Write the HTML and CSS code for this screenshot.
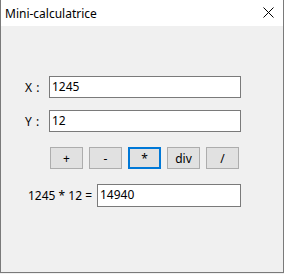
FILE: index.html
```html
<!DOCTYPE html>
<html lang="fr">
<head>
<meta charset="utf-8">
<title>Mini-calculatrice</title>
<link rel="stylesheet" href="styles.css">
</head>
<body>
<div class="window">
  <div class="titlebar">
    <span class="title">Mini-calculatrice</span>
    <svg class="close" width="11" height="11" viewBox="0 0 11 11"><path d="M0.5 0.5 L10.5 10.5 M10.5 0.5 L0.5 10.5" stroke="#000" stroke-width="1" fill="none"/></svg>
  </div>
  <div class="content">
    <div class="row row-x">
      <label class="lbl">X :</label>
      <div class="field">1245</div>
    </div>
    <div class="row row-y">
      <label class="lbl">Y :</label>
      <div class="field">12</div>
    </div>
    <div class="buttons">
      <button class="btn">+</button>
      <button class="btn">-</button>
      <button class="btn focus">*</button>
      <button class="btn">div</button>
      <button class="btn">/</button>
    </div>
    <div class="row result">
      <span class="expr">1245 * 12 =</span>
      <div class="field field-res">14940</div>
    </div>
  </div>
</div>
</body>
</html>
```
FILE: styles.css
```css
html, body {
  margin: 0;
  padding: 0;
  background: #f0f0f0;
}
body {
  font-family: "Segoe UI", "Noto Sans", "Open Sans", sans-serif;
  font-size: 12px;
  color: #000;
}
.window {
  width: 284px;
  height: 273px;
  box-sizing: border-box;
  border-left: 1px solid #7a7a7a;
  border-right: 1px solid #7a7a7a;
  border-bottom: 1px solid #7a7a7a;
  background: #f0f0f0;
  display: flex;
  flex-direction: column;
}
.titlebar {
  height: 26px;
  background: #fff;
  display: flex;
  align-items: center;
  justify-content: space-between;
  padding: 0 9px 0 4px;
  flex: none;
}
.title {
  font-size: 12px;
  line-height: 16px;
  margin-top: 2px;
}
.close {
  display: block;
  margin-top: -1px;
}
.content {
  display: flex;
  flex-direction: column;
  padding-top: 50px;
}
.row {
  display: flex;
  align-items: center;
  height: 22px;
}
.row-y {
  margin-top: 12px;
}
.lbl {
  width: 24px;
  margin-left: 24px;
  color: #000;
  letter-spacing: 0.5px;
}
.field {
  box-sizing: border-box;
  width: 192px;
  height: 22px;
  border: 1px solid #7a7a7a;
  background: #fff;
  padding: 0 0 0 2px;
  line-height: 20px;
}
.buttons {
  display: flex;
  gap: 6px;
  margin: 15px 0 0 49px;
}
.btn {
  box-sizing: border-box;
  width: 33px;
  height: 22px;
  border: 1px solid #adadad;
  background: #e1e1e1;
  font-family: inherit;
  font-size: 12px;
  padding: 0;
  color: #000;
  border-radius: 0;
}
.btn.focus {
  border: 2px solid #0078d7;
}
.result {
  margin-top: 15px;
  height: 23px;
}
.expr {
  width: 91px;
  text-align: right;
  padding-right: 5px;
}
.field-res {
  width: 144px;
  height: 23px;
}
```
